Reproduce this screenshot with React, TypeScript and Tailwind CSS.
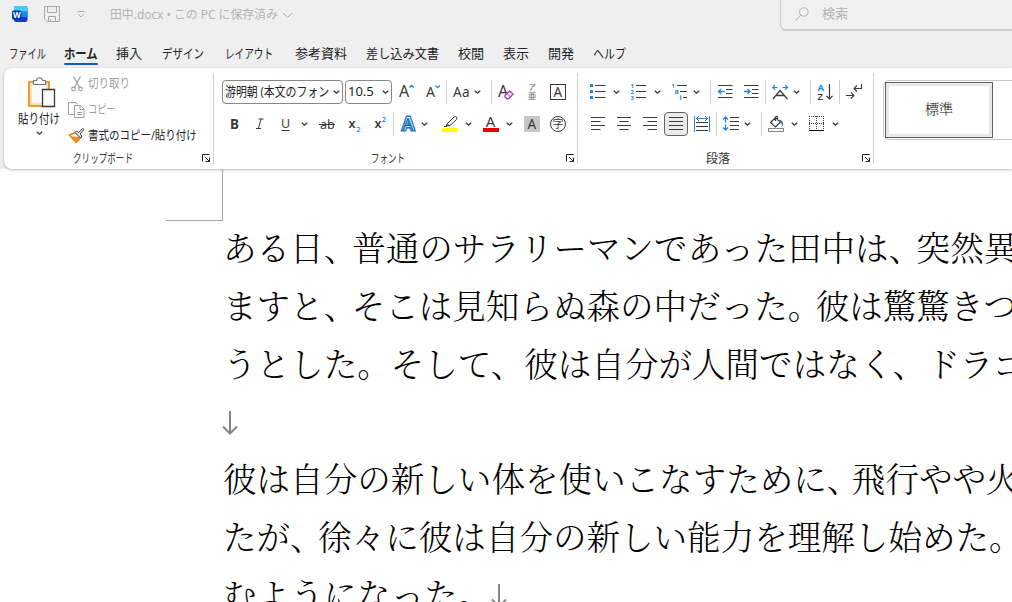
import { useLayoutEffect, useRef, useState } from "react";
import type { ReactNode } from "react";

/* Squeezes or stretches one line of text so that it fills the width of its box. */
function Fit({ className, children }: { className: string; children: ReactNode }) {
  const box = useRef<HTMLSpanElement>(null);
  const text = useRef<HTMLSpanElement>(null);
  const [k, setK] = useState(1);
  useLayoutEffect(() => {
    if (box.current && text.current) setK(box.current.clientWidth / text.current.offsetWidth);
  }, []);
  return (
    <span ref={box} className={`block shrink-0 whitespace-nowrap ${className}`}>
      <span ref={text} className="inline-block origin-left" style={{ transform: `scaleX(${k})` }}>
        {children}
      </span>
    </span>
  );
}

function Ico({ className, children }: { className: string; children: ReactNode }) {
  return (
    <svg viewBox="0 0 16 16" fill="none" stroke="#3b3a39" className={`h-4 w-4 shrink-0 overflow-visible ${className}`}>
      {children}
    </svg>
  );
}

function Chevron({ className }: { className: string }) {
  return (
    <svg viewBox="0 0 9 6" fill="none" stroke="#333" strokeWidth="1.3" className={`h-1.5 w-[9px] shrink-0 ${className}`}>
      <path d="M1.8 1.8 4.5 4.2 7.2 1.8" />
    </svg>
  );
}

function Sep({ className }: { className: string }) {
  return <div className={`h-6 w-px shrink-0 bg-[#d1d1d1] ${className}`} />;
}

function Launcher({ className }: { className: string }) {
  return (
    <svg viewBox="0 0 9 9" fill="none" stroke="#222" className={`h-[9px] w-[9px] shrink-0 ${className}`}>
      <path d="M.5 7.500V.5H7.500M3 3l4.500 4.500M7.500 3.500V7.500H3.500" />
    </svg>
  );
}

function Glyph({ x, y, size, fill = "#3b3a39", weight = 400, children }: { x: number; y: number; size: number; fill?: string; weight?: number; children: string }) {
  return (
    <text x={x} y={y} fontSize={size} fill={fill} fontWeight={weight} stroke="none">
      {children}
    </text>
  );
}

function Mark({ className, children }: { className: string; children: string }) {
  return <span className={`inline-block ${className}`}>{children}</span>;
}

function Line({ children }: { children: ReactNode }) {
  return <p className="h-[57.8px] whitespace-nowrap leading-[57.8px]">{children}</p>;
}

function Return({ className }: { className: string }) {
  return (
    <svg viewBox="0 0 16 24" fill="none" stroke="#858585" strokeWidth="2" className={`inline-block h-6 w-4 -translate-y-[3px] align-middle ${className}`}>
      <path d="M8 0V22M1 15.5l7 7 7-7" />
    </svg>
  );
}

function TitleBar() {
  return (
    <div className="flex h-[31px] items-start text-[#b3b3b3]">
      <svg viewBox="0 0 16 16" className="ml-3 mt-1.5 h-4 w-4 shrink-0">
        <rect x="2" width="13.5" height="16" rx="2" fill="#0f3fc4" />
        <path d="M2 6V2q0-2 2-2h9.5q2 0 2 2v4z" fill="#41cdf7" />
        <path d="M8 5.5h7.5V11H6z" fill="#1688f0" />
        <rect y="4.5" width="9.5" height="9" rx="1.5" fill="#0736a4" />
        <text x="1" y="12" fontSize="8" fontWeight="700" fill="#fff">W</text>
      </svg>
      <svg viewBox="0 0 16 16" fill="none" stroke="#a9a9a9" className="ml-4 mt-1.5 h-4 w-4 shrink-0">
        <path d="M.5.5h15v15H3L.5 13zM3.5.5v6h9v-6M4.5 15.5v-5h7v5M6.5 13v2.5" />
      </svg>
      <svg viewBox="0 0 8 8" fill="none" stroke="#a9a9a9" className="ml-[17px] mt-2.5 h-2 w-2 shrink-0">
        <path d="M.5 1.5h7M1 4l3 3 3-3" />
      </svg>
      <div className="ml-[25px] flex h-[30px] items-center text-[12.5px]">
        <Fit className="w-[168px]">田中.docx • この PC に保存済み</Fit>
        <svg viewBox="0 0 11 7" fill="none" stroke="#a9a9a9" className="ml-1 h-[7px] w-[11px]">
          <path d="m1 1 4.5 4.5L10 1" />
        </svg>
      </div>
      <div className="-mt-2 ml-auto flex h-[39px] w-[232px] items-center rounded-l-md border border-b-2 border-r-0 border-[#cdcdcd] bg-[#f0f0f0] pl-3.5 pt-1.5 text-[13px]">
        <svg viewBox="0 0 14 14" fill="none" stroke="#b0b0b0" className="h-3.5 w-3.5 shrink-0">
          <circle cx="8.8" cy="5" r="4.3" />
          <path d="M5.7 8.2.5 13.5" />
        </svg>
        <Fit className="ml-[13px] w-[26px]">検索</Fit>
      </div>
    </div>
  );
}

function Tabs() {
  return (
    <div className="flex h-9 items-center pt-2 text-[13px] leading-5 text-[#242424]">
      <Fit className="ml-[9px] w-[37px]">ファイル</Fit>
      <div className="relative ml-[18px] font-bold">
        <Fit className="w-[34px]">ホーム</Fit>
        <div className="absolute -bottom-0.5 left-0 h-0.5 w-[34px] rounded bg-[#185abd]" />
      </div>
      <Fit className="ml-[18px] w-[26px]">挿入</Fit>
      <Fit className="ml-5 w-[42px]">デザイン</Fit>
      <Fit className="ml-[21px] w-12">レイアウト</Fit>
      <Fit className="ml-[22px] w-[52px]">参考資料</Fit>
      <Fit className="ml-[19px] w-[73px]">差し込み文書</Fit>
      <Fit className="ml-[19px] w-[26px]">校閲</Fit>
      <Fit className="ml-[19px] w-[26px]">表示</Fit>
      <Fit className="ml-[19px] w-[26px]">開発</Fit>
      <Fit className="ml-[19px] w-[33px]">ヘルプ</Fit>
    </div>
  );
}

function ClipboardGroup() {
  return (
    <div className="flex w-[209px] shrink-0 flex-col">
      <div className="flex h-20">
        <div className="ml-3.5 flex w-[42px] shrink-0 flex-col items-center pt-[9px] text-[13px] leading-5 text-[#242424]">
          <svg viewBox="0 0 28 31" fill="none" className="ml-1.5 h-[31px] w-7">
            <path d="M1 5h20v24H1z" fill="#fde3ad" stroke="#e8820e" strokeWidth="1.6" />
            <path d="M4 7h14v19H4z" fill="#fafafa" />
            <path d="M5.5 7.5v-4h3C9-.2 14-.2 14.500 3.500h3v4z" fill="#fff" stroke="#797775" strokeWidth="1.2" />
            <path d="M14.500 12.500h12v17h-12z" fill="#fafafa" stroke="#3b3a39" strokeWidth="1.3" />
          </svg>
          <Fit className="w-[42px]">貼り付け</Fit>
          <Chevron className="mt-0.5" />
        </div>
        <div className="ml-[9px] flex flex-col pt-[3px] text-[12.5px]">
          <div className="flex h-[26px] shrink-0 items-center text-[#a19f9d]">
            <Ico className="">
              <g stroke="#a19f9d" strokeWidth="1.2">
                <path d="M4.500 0.500 11 12M11.500 0.500 5 12" />
                <circle cx="4.500" cy="13" r="1.800" />
                <circle cx="11.500" cy="13" r="1.800" />
              </g>
            </Ico>
            <Fit className="ml-[3px] w-[42px]">切り取り</Fit>
          </div>
          <div className="flex h-[26px] shrink-0 items-center text-[#a19f9d]">
            <Ico className="">
              <g stroke="#a19f9d">
                <path d="M5 12.500H-.500V.500h7.500l1.500 2M5.500 3.500h6l3.500 3.500v8.500H5.500zM11 3.500V7.500h4M8 10.500h5M8 12.500h5" />
              </g>
            </Ico>
            <Fit className="ml-[3px] w-7">コピー</Fit>
          </div>
          <div className="flex h-[26px] shrink-0 items-center text-[#242424]">
            <Ico className="">
              <path d="M6 4.500.500 7l6.500 7.500 5-5z" fill="#fff" stroke="#e8820e" strokeWidth="1.500" />
              <path d="m3.500 9 4 4.500 3-4z" fill="#f09a35" stroke="#e8820e" />
              <path d="m6 4.500 5.500 5.500 1.500-2-2-2 4-4.500L13.500.500 9.500 4.500 7.500 3z" fill="#e6e6e6" stroke="#444" />
            </Ico>
            <Fit className="ml-[3px] w-[109px]">書式のコピー/貼り付け</Fit>
          </div>
        </div>
      </div>
      <div className="flex h-[22px] items-center text-[12px] text-[#333]">
        <Fit className="ml-[69px] w-[60px]">クリップボード</Fit>
        <Launcher className="ml-[69px]" />
      </div>
    </div>
  );
}

function FontGroup() {
  return (
    <div className="flex w-[363px] shrink-0 flex-col">
      <div className="mt-3 flex h-6 items-center text-[13px] text-[#222]">
        <div className="ml-2 flex h-6 w-[121px] shrink-0 items-center rounded-[4px] border border-[#8a8886] bg-white pl-0.5">
          <Fit className="w-[104px]">游明朝 (本文のフォン</Fit>
          <Chevron className="ml-[3px]" />
        </div>
        <div className="ml-0.5 flex h-6 w-[47px] shrink-0 items-center rounded-[4px] border border-[#8a8886] bg-white pl-0.5">
          <Fit className="w-[26px]">10.5</Fit>
          <Chevron className="ml-[7px]" />
        </div>
        <Ico className="ml-[7px]">
          <Glyph x={0} y={13} size={16}>A</Glyph>
          <path d="m10.500 3.500 2.200-2.200 2.200 2.200" stroke="#1e88d2" strokeWidth="1.300" />
        </Ico>
        <Ico className="ml-2.5">
          <Glyph x={1} y={13} size={14}>A</Glyph>
          <path d="m10.500 1.500 2.200 2.200 2.200-2.200" stroke="#1e88d2" strokeWidth="1.300" />
        </Ico>
        <Sep className="ml-[5px]" />
        <span className="ml-1.5 w-[18px] text-[13.500px] tracking-wide text-[#3b3a39]">Aa</span>
        <Chevron className="ml-0.5" />
        <Sep className="ml-[9px]" />
        <Ico className="ml-1.5">
          <Glyph x={0} y={12.5} size={16}>A</Glyph>
          <path d="m7 11.500 4.500-4.500 3.500 3-4.500 4.800H9L7 13z" fill="#fff" stroke="#a33bb5" strokeWidth="1.400" />
          <path d="m9 9.500 3.500 3.300" stroke="#a33bb5" />
        </Ico>
        <Ico className="ml-2.5">
          <Glyph x={4.500} y={6} size={7.500} fill="#605e5c">ア</Glyph>
          <Glyph x={4} y={15} size={8.500} fill="#605e5c">亜</Glyph>
        </Ico>
        <Ico className="ml-2.5">
          <rect x=".5" y=".5" width="15" height="15" />
          <Glyph x={3.600} y={13} size={13.500}>A</Glyph>
        </Ico>
      </div>
      <div className="mt-2 flex h-6 items-center">
        <Ico className="ml-3"><Glyph x={4} y={12.500} size={13.500} weight={700}>B</Glyph></Ico>
        <Ico className="ml-2.5">
          <path d="M6.500 3h5M4 12.500h5M9.200 3 6.300 12.500" />
        </Ico>
        <Ico className="ml-2.5">
          <Glyph x={3} y={11.500} size={12.500}>U</Glyph>
          <path d="M3.500 14.500h8" />
        </Ico>
        <Chevron className="ml-1.5" />
        <Ico className="ml-2.5">
          <Glyph x={1} y={13} size={12.500}>ab</Glyph>
          <path d="M0 8.500h16" />
        </Ico>
        <Ico className="ml-3">
          <Glyph x={1.500} y={12} size={12.500} weight={600}>x</Glyph>
          <Glyph x={9.500} y={15.500} size={7} fill="#1e88d2" weight={600}>2</Glyph>
        </Ico>
        <Ico className="ml-2.5">
          <Glyph x={1.500} y={12} size={12.500} weight={600}>x</Glyph>
          <Glyph x={9} y={5.500} size={7} fill="#1e88d2" weight={600}>2</Glyph>
        </Ico>
        <Sep className="ml-1" />
        <Ico className="ml-1.5">
          <text x="2.500" y="14" fontSize="17" fontWeight="600" fill="#fff" stroke="#2079c3" strokeWidth="3" paintOrder="stroke">A</text>
          <Glyph x={2.500} y={14} size={17} fill="#1466ad" weight={400}>A</Glyph>
        </Ico>
        <Chevron className="ml-1" />
        <Ico className="ml-[13px]">
          <path d="m5 8 7-7q1.500-1 2.500 0t0 2.500l-6.500 6-3.500.500zM2 10.500h3M5 8l3 2" />
          <rect x="0" y="12" width="16" height="4" fill="#ffff00" stroke="none" />
        </Ico>
        <Chevron className="ml-1.5" />
        <Ico className="ml-2.5">
          <Glyph x={2.800} y={10.500} size={15}>A</Glyph>
          <rect x="0" y="12" width="16" height="4" fill="#ee0000" stroke="none" />
        </Ico>
        <Chevron className="ml-1.5" />
        <Ico className="ml-2.5">
          <rect width="16" height="16" fill="#c6c6c6" stroke="none" />
          <Glyph x={3.600} y={13} size={13.500}>A</Glyph>
        </Ico>
        <Ico className="ml-2.5">
          <circle cx="8" cy="8" r="7.500" />
          <Glyph x={2.500} y={12} size={11}>字</Glyph>
        </Ico>
      </div>
      <div className="mt-3 flex h-[22px] items-center text-[12px] text-[#333]">
        <Fit className="ml-[157px] w-[34px]">フォント</Fit>
        <Launcher className="ml-[161px]" />
      </div>
    </div>
  );
}

function ParagraphGroup() {
  return (
    <div className="flex w-[295px] shrink-0 flex-col">
      <div className="mt-3 flex h-6 items-center">
        <Ico className="ml-3">
          <path d="M5 1.500h10.500M5 7.500h10.500M5 13.500h10.500" />
          <path d="M0 0h3v3H0zM0 6h3v3H0zM0 12h3v3H0z" fill="#1e88d2" stroke="none" />
        </Ico>
        <Chevron className="ml-1.5" />
        <Ico className="ml-[9px]">
          <path d="M6 1.500h10M6 7.500h10M6 13.500h10" />
          <Glyph x={0.500} y={4} size={6} fill="#1e88d2" weight={700}>1</Glyph>
          <Glyph x={0.500} y={10} size={6} fill="#1e88d2" weight={700}>2</Glyph>
          <Glyph x={0.500} y={16} size={6} fill="#1e88d2" weight={700}>3</Glyph>
        </Ico>
        <Chevron className="ml-[7px]" />
        <Ico className="ml-[9px]">
          <path d="M6 1.500h10M9 7.500h7M12 13.500h4" />
          <Glyph x={0.500} y={4} size={6} fill="#1e88d2" weight={700}>1</Glyph>
          <Glyph x={3.500} y={10} size={7} fill="#1e88d2" weight={700}>a</Glyph>
          <Glyph x={8.500} y={16} size={7} fill="#1e88d2" weight={700}>i</Glyph>
        </Ico>
        <Chevron className="ml-[5px]" />
        <Sep className="ml-[9px]" />
        <Ico className="ml-1.5">
          <path d="M1 1.500h14.500M9 5.500h6.500M9 9.500h6.500M1 13.500h14.500" />
          <path d="M7.500 7.500H1.500M4 5 1.500 7.500 4 10" stroke="#1e88d2" strokeWidth="1.300" />
        </Ico>
        <Ico className="ml-2.5">
          <path d="M1 1.500h14.500M9 5.500h6.500M9 9.500h6.500M1 13.500h14.500" />
          <path d="M1 7.500h6M4.500 5 7 7.500 4.500 10" stroke="#1e88d2" strokeWidth="1.300" />
        </Ico>
        <Sep className="ml-1.5" />
        <Ico className="ml-1.5">
          <path d="M1 15 8 6.500 15.500 15M4 11.500h8.500" strokeWidth="1.300" />
          <path d="M5.500 3.500H.800M3 1.200.800 3.500 3 5.800M10.500 3.500h5M13.300 1.200l2.200 2.300-2.200 2.300" stroke="#1e88d2" strokeWidth="1.200" />
        </Ico>
        <Chevron className="ml-1" />
        <Sep className="ml-[9px]" />
        <Ico className="ml-1.5">
          <Glyph x={0.500} y={7} size={9.500} fill="#1e88d2" weight={700}>A</Glyph>
          <Glyph x={0.500} y={16} size={9.500} weight={600}>Z</Glyph>
          <path d="M12.500 0v15M9.500 12l3 3 3-3" strokeWidth="1.200" />
        </Ico>
        <Sep className="ml-1.5" />
        <Ico className="ml-1.5">
          <path d="M15.500 0v4.500H8M11 1.500l-3 3 3 3M0 11.500h8M5 8.500l3 3-3 3" strokeWidth="1.100" />
        </Ico>
      </div>
      <div className="mt-2 flex h-6 items-center">
        <Ico className="ml-3"><path d="M1 1.500h14M1 5.500h9.500M1 9.500h14M1 13.500h9.500" /></Ico>
        <Ico className="ml-2.5"><path d="M1 1.500h14M3.500 5.500h9M1 9.500h14M3.500 13.500h9" /></Ico>
        <Ico className="ml-2.5"><path d="M1 1.500h14M5.500 5.500H15M1 9.500h14M5.500 13.500H15" /></Ico>
        <div className="ml-1.5 flex h-6 w-6 shrink-0 items-center justify-center rounded-[4px] border border-[#616161] bg-[#ebebeb]">
          <Ico className=""><path d="M1 1.500h14M1 5.500h14M1 9.500h14M1 13.500h14" /></Ico>
        </div>
        <Ico className="ml-1.5">
          <path d="M2 6.500h12M2 10.500h12M2 14.500h12" />
          <path d="M.500 0v16M15.500 0v16M2.500 2.500h11M5 0 2.500 2.500 5 5M11 0l2.500 2.500L11 5" stroke="#1e88d2" />
        </Ico>
        <Sep className="ml-1.5" />
        <Ico className="ml-1.5">
          <path d="M7 1.500h9M7 5.500h9M7 9.500h9M7 13.500h9" />
          <path d="M2.500 1v5.500M0 3.500 2.500 1 5 3.500M2.500 8.500V14M0 11.500 2.500 14 5 11.500" stroke="#1e88d2" strokeWidth="1.300" />
        </Ico>
        <Chevron className="ml-1" />
        <Sep className="ml-[9px]" />
        <Ico className="ml-1.5">
          <path d="m2.500 6.500 5-5 5 4.500-5 5zM7.500 5V1q1-1.500 2 0v3.500" strokeWidth="1.200" />
          <path d="M11 3.500q4.500 0 4 6.500-2-1-2-4z" fill="#1e72bd" stroke="none" />
          <rect x=".5" y="12.500" width="15" height="3" fill="#fff" stroke="#8a8886" />
        </Ico>
        <Chevron className="ml-1.5" />
        <Ico className="ml-[9px]">
          <path d="M1 .500h15M1 7.500h15M1.500 0v14M8.500 0v14M15.500 0v14" strokeDasharray="1 1" />
          <path d="M1 14.500h15" stroke="#111" />
        </Ico>
        <Chevron className="ml-[7px]" />
      </div>
      <div className="mt-3 flex h-[22px] items-center text-[12px] text-[#333]">
        <Fit className="ml-32 w-6">段落</Fit>
        <Launcher className="ml-[132px]" />
      </div>
    </div>
  );
}

function StylesGroup() {
  return (
    <div className="ml-[9px] mt-3 flex h-[60px] w-[140px] shrink-0 rounded-l-md border border-r-0 border-[#c8c8c8] p-px">
      <div className="flex h-14 w-[108px] items-center justify-center border border-[#616161] bg-[#e8e8e8] p-[3px]">
        <div className="flex h-full w-full items-center justify-center bg-white pb-[3px] font-['Noto_Serif_CJK_JP','Noto_Sans_CJK_JP',serif] text-[14px] font-light text-[#222]">
          標準
        </div>
      </div>
    </div>
  );
}

function GroupRule() {
  return <div className="mt-[5px] h-[91px] w-px shrink-0 bg-[#d1d1d1]" />;
}

export default function App() {
  return (
    <div className="h-[602px] w-[1012px] overflow-hidden bg-white font-['Noto_Sans','Noto_Sans_CJK_JP',sans-serif]">
      <header className="h-[169px] bg-[#efefef]">
        <TitleBar />
        <Tabs />
        <div className="ml-1 mt-px flex h-[101px] overflow-visible rounded-l-lg bg-white shadow-[0_1px_3px_rgba(0,0,0,0.28)]">
          <ClipboardGroup />
          <GroupRule />
          <FontGroup />
          <GroupRule />
          <ParagraphGroup />
          <GroupRule />
          <StylesGroup />
        </div>
      </header>
      <main>
        <div className="ml-[166px] h-[52px] w-[57px] border-b border-r border-[#a6a6a6]" />
        <article lang="ja" className="-mt-[3px] ml-[223px] font-['Noto_Serif_CJK_JP','Noto_Sans_CJK_JP',serif] text-[33.560px] font-light text-black">
          <Line>ある日<Mark className="w-[28.500px]">、</Mark>普通のサラリーマンであった田中は<Mark className="w-[28px]">、</Mark>突然異</Line>
          <Line>ますと<Mark className="w-[28px]">、</Mark>そこは見知らぬ森の中だった<Mark className="w-[28px]">。</Mark>彼は驚驚きつ</Line>
          <Line>うとした。そして、彼は自分が人間ではなく、ドラゴ</Line>
          <Line><Return className="-ml-px" /></Line>
          <Line>彼は自分の新しい体を使いこなすために<Mark className="w-[25px]">、</Mark>飛行やや火</Line>
          <Line>たが<Mark className="w-[28px]">、</Mark>徐々に彼は自分の新しい能力を理解し始めた。</Line>
          <Line>むようになった。<Return className="" /></Line>
        </article>
      </main>
    </div>
  );
}
